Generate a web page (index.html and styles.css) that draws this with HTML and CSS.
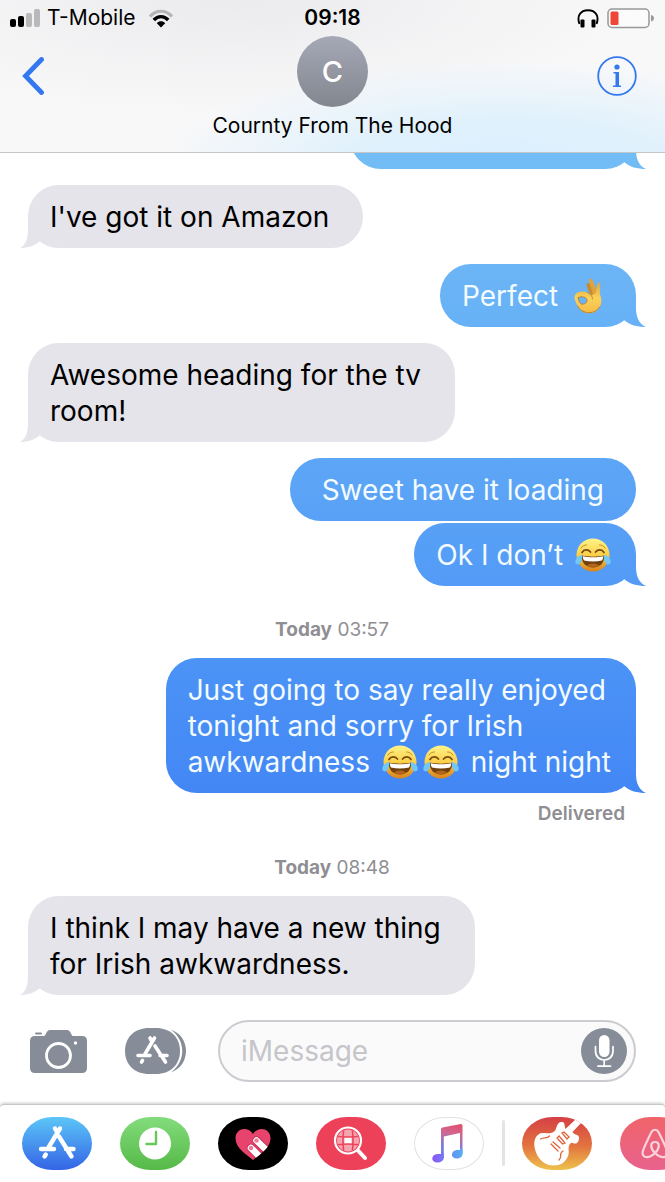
FILE: index.html
```html
<!DOCTYPE html>
<html lang="en">
<head>
<meta charset="utf-8">
<meta name="viewport" content="width=device-width, initial-scale=1">
<title>Messages</title>
<link rel="stylesheet" href="styles.css">
</head>
<body>
<svg class="defs" aria-hidden="true">
  <defs>
    <linearGradient id="face" x1="0" y1="0" x2="0" y2="1">
      <stop offset="0" stop-color="#fff58a"/><stop offset=".5" stop-color="#fbcf48"/><stop offset="1" stop-color="#d9811c"/>
    </linearGradient>
    <linearGradient id="skin" x1="0" y1="0" x2="0" y2="1">
      <stop offset="0" stop-color="#dfa63f"/><stop offset=".5" stop-color="#fbd15a"/><stop offset="1" stop-color="#f3bb45"/>
    </linearGradient>
    <linearGradient id="note" gradientUnits="userSpaceOnUse" x1="42" y1="7" x2="34" y2="46">
      <stop offset="0" stop-color="#e0506c"/><stop offset=".25" stop-color="#d0668f"/><stop offset=".6" stop-color="#7d7be0"/><stop offset="1" stop-color="#5a8bf5"/>
    </linearGradient>
    <linearGradient id="noteheads" gradientUnits="userSpaceOnUse" x1="18" y1="0" x2="48" y2="0">
      <stop offset="0" stop-color="#8a55f7"/><stop offset="1" stop-color="#55aef2"/>
    </linearGradient>
    <clipPath id="heart-clip"><path d="M35 43C29 38 17.500 31 17.500 21.500C17.500 11 30 9 35 17C40 9 52.500 11 52.500 21.500C52.500 31 41 38 35 43Z"/></clipPath>
    <clipPath id="lens-clip"><circle cx="32" cy="23.500" r="11"/></clipPath>
    <symbol id="joy" viewBox="0 0 36 36">
      <circle cx="18" cy="18" r="16.500" fill="url(#face)"/>
      <path d="M7 15.500C9 12 13 12 15.500 15M20.500 15C23 12 27 12 29 15.500" fill="none" stroke="#7b4a12" stroke-width="1.700" stroke-linecap="round"/>
      <path d="M6 11C7.500 8.500 9.500 8 11.500 8M30 11C28.500 8.500 26.500 8 24.500 8" fill="none" stroke="#c98b24" stroke-width="1" stroke-linecap="round"/>
      <path d="M7 18.500C13 20 23 20 29 18.500C30 25.500 25 30.500 18 30.500S6 25.500 7 18.500Z" fill="#70400f"/>
      <path d="M8 19.300C14 20.700 22 20.700 28 19.300C28.300 21 27.800 22.500 27 23.500C21 24.700 15 24.700 9 23.500C8.200 22.500 7.700 21 8 19.300Z" fill="#fff"/>
      <path d="M12 28.500C15 25.800 21 25.800 24 28.500C20.500 30.800 15.500 30.800 12 28.500Z" fill="#b5651a"/>
      <path d="M7.500 18C3 18.500-.5 22 .5 26C2 28.500 5 27.500 6 25C7 22.500 7.300 20 7.500 18Z" fill="#6fc8f5"/>
      <path d="M28.500 18C33 18.500 36.500 22 35.500 26C34 28.500 31 27.500 30 25C29 22.500 28.700 20 28.500 18Z" fill="#6fc8f5"/>
    </symbol>
    <symbol id="ok-hand" viewBox="0 0 28 36">
      <path d="M12.500 7C12 5 14.500 4 15.800 6L21 15L17.500 18L13.500 10.500Z" fill="#c98a2c"/>
      <path d="M15 3C14.500 .5 17.500-.2 18.500 2L23.500 14L19.500 18Z" fill="#e0a33a"/>
      <path fill-rule="evenodd" d="M23.500 6C24 3.800 26.500 4.500 26.300 7L25.800 16C28 21 28 26 25 30C22 35 16 36.500 10.500 34.500C5.500 32.500 3 27.500 1.200 22.500C.3 20.500 .3 18.500 1.200 16.500C3 13.800 9 12.500 13.500 14.500L17.500 17L21.500 15.500ZM4.200 19.500C4.500 22.500 5.500 25 7.500 26.200C10.500 26.500 13.500 24.500 13 21.800C12 19 8 17.800 4.200 19.500Z" fill="url(#skin)"/>
      <path d="M4.200 19.500C4.500 22.500 5.500 25 7.500 26.200C10.500 26.500 13.500 24.500 13 21.800C12 19 8 17.800 4.200 19.500M13.500 14.500C17 16.500 18.500 18.500 18.500 21M3.500 28C7 35.500 20 38 25.500 29" fill="none" stroke="#b97c27" stroke-width=".9" stroke-linecap="round"/>
    </symbol>
  </defs>
</svg>

<div class="phone">
  <header class="header">
    <div class="status">
      <div class="status-left">
        <svg width="30" height="18" viewBox="0 0 30 18" role="img" aria-label="Signal, 2 of 4 bars">
          <rect x="0" y="10" width="6" height="8" rx="2"/><rect x="8" y="7" width="6" height="11" rx="2"/>
          <rect x="16" y="4" width="6" height="14" rx="2" fill="#b9b9bb"/><rect x="24" y="0" width="6" height="18" rx="2" fill="#b9b9bb"/>
        </svg>
        <span class="carrier">T-Mobile</span>
        <svg width="26" height="19" viewBox="0 0 26 19" role="img" aria-label="Wi-Fi">
          <path d="M2 7.500C8 .5 18 .5 24 7.500" fill="none" stroke="#b4b4b6" stroke-width="3.200"/>
          <path d="M5.800 11C10 6.500 16 6.500 20.200 11" fill="none" stroke="#000" stroke-width="3.400"/>
          <path d="M8.800 14.300C11.200 11.700 14.800 11.700 17.200 14.300L13 18.600Z"/>
        </svg>
      </div>
      <time class="clock">09:18</time>
      <div class="status-right">
        <svg width="22" height="19" viewBox="0 0 22 19" role="img" aria-label="Headphones connected">
          <path d="M2.500 15C-.5 7 3.500 1.200 11 1.200S22.500 7 19.500 15" fill="none" stroke="#000" stroke-width="1.900"/>
          <rect x="3.500" y="10.500" width="4" height="8" rx="1"/><rect x="14.500" y="10.500" width="4" height="8" rx="1"/>
        </svg>
        <svg width="48" height="21" viewBox="0 0 48 21" role="img" aria-label="Battery low">
          <rect x="1" y="1" width="41" height="18.500" rx="4" fill="#fbfbfb" stroke="#98989a" stroke-width="1.500"/>
          <rect x="3.500" y="3.500" width="8" height="13.500" rx="1.500" fill="#ee4637"/>
          <path d="M44 7C48 7.500 48 13 44 13.500Z" fill="#98989a"/>
        </svg>
      </div>
    </div>
    <nav class="nav">
      <button class="nav-button back" aria-label="Back">
        <svg width="22" height="38" viewBox="0 0 22 38"><path d="M19.500 2.500L3.500 19L19.500 35.500" fill="none" stroke="#3478f0" stroke-width="4.800" stroke-linecap="round" stroke-linejoin="miter"/></svg>
      </button>
      <div class="avatar">C</div>
      <button class="nav-button info" aria-label="Details">
        <svg width="40" height="40" viewBox="0 0 40 40" fill="#3478f0"><circle cx="20" cy="20" r="18.800" fill="none" stroke="#3478f0" stroke-width="1.800"/><circle cx="20" cy="11" r="2.600"/><path d="M16.500 16H22V29.500H24V31H16V29.500H18.500V17.500H16.500Z"/></svg>
      </button>
      <h1 class="contact">Cournty From The Hood</h1>
    </nav>
  </header>

  <main class="thread">
    <div class="bubble out tail clipped"></div>
    <div class="bubble in tail">I've got it on Amazon</div>
    <div class="bubble out tail">Perfect <svg class="hand" role="img" aria-label="OK hand"><use href="#ok-hand"/></svg></div>
    <div class="bubble in tail">Awesome heading for the tv<br>room!</div>
    <div class="bubble out plain">Sweet have it loading</div>
    <div class="bubble out tail follow">Ok I don’t <svg class="emoji" role="img" aria-label="Tears of joy"><use href="#joy"/></svg></div>
    <p class="stamp"><b>Today</b> 03:57</p>
    <div class="bubble out tail">Just going to say really enjoyed<br>tonight and sorry for Irish<br>awkwardness <svg class="emoji" role="img" aria-label="Tears of joy"><use href="#joy"/></svg><svg class="emoji second" role="img" aria-label="Tears of joy"><use href="#joy"/></svg> night night</div>
    <p class="receipt">Delivered</p>
    <p class="stamp"><b>Today</b> 08:48</p>
    <div class="bubble in tail">I think I may have a new thing<br>for Irish awkwardness.</div>
  </main>

  <form class="composer">
    <button type="button" class="tool" aria-label="Camera">
      <svg width="57" height="43" viewBox="0 0 57 43"><path d="M5 6H14C16 6 16 0 20 0H37C41 0 41 6 43 6H52Q57 6 57 11V38Q57 43 52 43H5Q0 43 0 38V11Q0 6 5 6Z" fill="#868d98"/><rect x="5" y="2.500" width="7" height="2" rx="1" fill="#868d98"/><circle cx="28.500" cy="25.500" r="12" fill="none" stroke="#fff" stroke-width="2.800"/><circle cx="45.500" cy="13" r="1.700" fill="#fff"/></svg>
    </button>
    <button type="button" class="tool" aria-label="Apps">
      <svg width="62" height="46" viewBox="0 0 62 46"><path d="M24 0H31C45 0 55 9 55 23S45 46 31 46H24C10 46 0 37 0 23S10 0 24 0Z" fill="#868d98"/><path d="M46 1.500C66 9 66 37 46 44.500C61 33 61 13 46 1.500Z" fill="#868d98"/><g fill="none" stroke="#fff" stroke-width="3.600" stroke-linecap="round"><path d="M13 27.500H25M35 27.500H42M29.500 10L20 26M25 10L27 13.500M30 18L40.500 34M17.500 32.500L16.500 34"/></g></svg>
    </button>
    <div class="field">
      <input class="input" type="text" placeholder="iMessage" aria-label="iMessage">
      <button type="button" class="mic" aria-label="Record audio">
        <svg width="46" height="46" viewBox="0 0 46 46"><circle cx="23" cy="23" r="23" fill="#868d98"/><rect x="18" y="7" width="10.500" height="22" rx="5.200" fill="#fff"/><path d="M14.500 18.500V23C14.500 35 32 35 32 23V18.500M23.200 32V38M17 38.200H29.500" fill="none" stroke="#fff" stroke-width="1.700" stroke-linecap="round"/></svg>
      </button>
    </div>
  </form>

  <footer class="dock">
    <button class="app store" aria-label="App Store">
      <svg viewBox="0 0 70 53"><g fill="none" stroke="#fff" stroke-width="4.400" stroke-linecap="round"><path d="M19 32H32M44 32H51.500M38 11.500L26.500 30.500M33 11.500L35 15M37 19.500L49.500 39.500M23.800 37.500L22.500 39.500"/></g></svg>
    </button>
    <button class="app recents" aria-label="Recents">
      <svg viewBox="0 0 70 53"><circle cx="35" cy="26.500" r="16" fill="#fff"/><path d="M36 15V27H26.500" fill="none" stroke="#66c75a" stroke-width="2.400" stroke-linecap="round" stroke-linejoin="round"/></svg>
    </button>
    <button class="app touch" aria-label="Digital Touch">
      <svg viewBox="0 0 70 53"><g clip-path="url(#heart-clip)"><rect width="70" height="53" fill="#e8436d"/><path d="M38.500 23.500L54 38.500M33 31L47 45" stroke="#c12f55" stroke-width="8.400" stroke-linecap="round"/><path d="M38.500 23.500L54 38.500M33 31L47 45" stroke="#fff" stroke-width="6.600" stroke-linecap="round"/><circle cx="38.500" cy="23.500" r="2.300" fill="#f07d98"/><circle cx="33" cy="31" r="2.300" fill="#f07d98"/></g></svg>
    </button>
    <button class="app images" aria-label="Images">
      <svg viewBox="0 0 70 53"><g clip-path="url(#lens-clip)"><rect x="20" y="11" width="24" height="25" fill="#f7a3b0"/><rect x="28.500" y="20" width="7" height="7" fill="#fff"/><path d="M28 10Q26 23 28 37M36 10Q38 23 36 37M20 19Q32 21 44 19M20 28Q32 26 44 28" fill="none" stroke="#ec4159" stroke-width="1.500"/></g><circle cx="32" cy="23.500" r="13" fill="none" stroke="#fff" stroke-width="2.200"/><path d="M42 33.500L49 41" stroke="#fff" stroke-width="4" stroke-linecap="round"/></svg>
    </button>
    <button class="app music" aria-label="Music">
      <svg viewBox="0 0 70 53"><path d="M28.500 10.500L47 7Q48.500 7 48.500 8.500V37H46V16L29.800 19.500V41H27V12.500Q27 11 28.500 10.500Z" fill="url(#note)"/><path d="M29.800 36V40.500C29.800 44 26.500 45.500 23.500 45.500C16.500 45.500 16.500 37.500 23.500 37H27V35ZM48.500 32V37C48.500 40 45.500 41.500 43 41.500C36 41.500 36.500 33.500 43 33H46V31Z" fill="url(#noteheads)"/></svg>
    </button>
    <span class="divider"></span>
    <button class="app garage" aria-label="GarageBand">
      <svg viewBox="0 0 70 53"><path d="M56 0L60 5L50.500 15C52 18 55 17 56.500 19C58 22 56 26 54 26.500C51 27 50 24 48 27C45 31 48 35 46 39C44 44 40 49 31 48.500C19 48 14 38 12.500 30C11.500 23 14 17 20 16C26 15.500 30 18 33.500 13C35 9 35.500 5.500 39 5C42 4.500 42.500 6 42.500 8L43.500 12Z" fill="#fff"/><g fill="none" stroke="#df653d" stroke-width="1.300" stroke-linecap="round"><path d="M29 27L36 34M31 25L38 31M37 19L43 26L40.500 27L35 21ZM42 15L47 20L45 22L40 16ZM18.500 22C22 20 25 22 27.500 19M41 34C36 37 41 39 37 43"/></g></svg>
    </button>
    <button class="app stays" aria-label="Airbnb">
      <svg viewBox="0 0 70 53"><path d="M35 36C30 31 30 25 35 25S40 31 35 36C29 42 23 41 22.500 36C22.500 33 29 20 31.500 15C33 12 37 12 38.500 15C41 20 47.500 33 47.500 36C47 41 41 42 35 36Z" fill="none" stroke="#fbd3dc" stroke-width="2.200"/></svg>
    </button>
  </footer>
</div>
</body>
</html>
```
FILE: styles.css
```css
* { box-sizing: border-box; }

html, body { height: 100%; }

body {
  margin: 0;
  background: #fff;
  color: #000;
  font-family: Inter, "Liberation Sans", sans-serif;
}

button {
  display: block;
  padding: 0;
  border: 0;
  background: none;
  cursor: pointer;
}

svg { display: block; }

.defs {
  position: absolute;
  width: 0;
  height: 0;
}

.phone {
  display: flex;
  flex-direction: column;
  height: 100%;
  overflow: hidden;
}

/* Header */
.header {
  flex: none;
  border-bottom: 1px solid #c3c5c9;
  background:
    radial-gradient(ellipse 52% 70% at 76% 110%, #d9effd 0%, #e0f1fc 45%, rgba(240, 246, 251, 0) 100%),
    radial-gradient(ellipse 60% 75% at 35% 0%, #ebebed 0%, rgba(247, 247, 248, 0) 100%),
    #f8f8f9;
}

.status {
  display: grid;
  grid-template-columns: 1fr auto 1fr;
  align-items: center;
  height: 36px;
  padding: 0 10px;
  font-size: 20px;
  line-height: 24px;
}

.status-left, .status-right {
  display: flex;
  align-items: center;
  gap: 8px;
}

.status-left { gap: 7px; }

.status-right { justify-content: flex-end; }

.carrier {
  margin-right: 5px;
  font-size: 21px;
}

.clock {
  font-size: 21px;
  font-weight: 600;
}

.nav {
  display: grid;
  grid-template-columns: 1fr auto 1fr;
  grid-template-rows: 80px auto;
  align-items: center;
  padding: 0 22px 16px;
}

.info {
  justify-self: end;
  margin-right: 6px;
}

.back { justify-self: start; }

.avatar {
  display: flex;
  align-items: center;
  justify-content: center;
  align-self: start;
  width: 71px;
  height: 71px;
  border-radius: 50%;
  background: linear-gradient(#a5a9b6, #83868f);
  color: #fff;
  font-size: 29px;
  font-weight: 500;
}

.contact {
  grid-column: 1 / -1;
  margin: 0;
  font-size: 21px;
  font-weight: 400;
  line-height: 20px;
  text-align: center;
}

/* Conversation */
.thread {
  display: flex;
  flex: 1;
  flex-direction: column;
  justify-content: flex-end;
  min-height: 0;
  overflow: hidden;
  padding: 0 29px 0 28px;
}

.bubble {
  position: relative;
  flex: none;
  margin-top: 16px;
  padding: 14px 34px 13px 22px;
  border-radius: 31px;
  font-size: 28px;
  line-height: 36px;
  white-space: nowrap;
}

.in {
  align-self: flex-start;
  background: #e5e4ea;
}

.out {
  align-self: flex-end;
  padding-right: 25px;
  background: linear-gradient(#72bdf5 13%, #69b3f6 25%, #5aa3f6 42%, #4b92f6 57%, #4387f5 67%) fixed;
  color: #f3fbff;
}

.plain { padding: 14px 32px 13px; }

.follow { margin-top: 2px; }

.clipped {
  width: 286px;
  height: 63px;
}

.tail::after {
  content: "";
  position: absolute;
  bottom: 0;
  width: 40px;
  height: 31px;
  background: inherit;
}

.out.tail::after {
  right: -10px;
  clip-path: path("M10 0H30V12C30 21 33 28 40 31C31 31 24 29 18 24Z");
}

.in.tail::after {
  left: -8px;
  clip-path: path("M30 0H8V12C8 21 6 28 0 31C8 31 14 29 20 24Z");
}

.emoji, .hand {
  display: inline-block;
  width: 36px;
  height: 36px;
  vertical-align: bottom;
}

.emoji { margin-left: 4px; }

.hand {
  width: 28px;
  margin: 0 9px 0 8px;
}

.second { margin: 0 4px 0 5px; }

.stamp, .receipt {
  flex: none;
  margin: 32px 0 0;
  color: #8e8e93;
  font-size: 19px;
  line-height: 24px;
  text-align: center;
}

.receipt {
  margin: 9px 11px 0 0;
  font-weight: 600;
  text-align: right;
}

.receipt + .stamp { margin-top: 30px; }

/* Composer */
.composer {
  display: flex;
  flex: none;
  align-items: center;
  gap: 38px;
  padding: 25px 29px 22px 30px;
}

.field {
  display: flex;
  flex: 1;
  align-items: center;
  min-width: 0;
  height: 62px;
  margin-left: -7px;
  padding: 0 7px 0 21px;
  border: 2px solid #cbcbd0;
  border-radius: 31px;
  background: #fafafb;
}

.input {
  flex: 1;
  width: 100%;
  min-width: 0;
  padding: 0;
  border: 0;
  outline: 0;
  background: none;
  font: 28px/36px Inter, "Liberation Sans", sans-serif;
}

.input::placeholder { color: #c5c5ca; opacity: 1; }

.mic { flex: none; }

/* App strip */
.dock {
  display: flex;
  flex: none;
  gap: 28px;
  height: 78px;
  padding: 12px 0 12px 22px;
  overflow: hidden;
  border-top: 1px solid #c6c6c8;
  border-radius: 4px 4px 0 0;
  background: #fff;
  box-shadow: 0 -1px 3px rgba(0, 0, 0, .2);
}

.app {
  flex: none;
  width: 70px;
  height: 53px;
  overflow: hidden;
  border-radius: 31px / 27px;
}

.store { background: linear-gradient(#5cc6f7, #3464e6); }
.recents { background: linear-gradient(#83dc7c, #55b947); }
.touch { background: #000; }
.images { background: #ec4159; }
.music { background: #fff; box-shadow: inset 0 0 0 1px #e2e2e4; }
.garage { background: linear-gradient(#d63f45, #e2743f 55%, #eec14c); }
.stays { background: linear-gradient(#f0646a, #e8628c); }

.divider {
  flex: none;
  width: 3px;
  height: 46px;
  margin: 3px -11px 0 -10px;
  border-radius: 2px;
  background: #e3e3e8;
}
```
